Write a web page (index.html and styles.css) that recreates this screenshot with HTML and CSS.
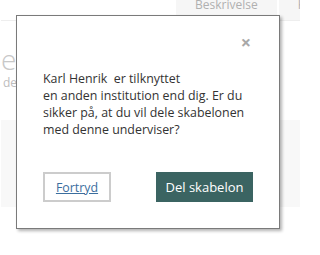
FILE: index.html
```html
<!DOCTYPE html>
<html lang="da">
<head>
<meta charset="utf-8">
<link rel="stylesheet" href="styles.css">
</head>
<body>
<div class="page">
  <div class="tabs">
    <div class="tab">Beskrivelse</div>
    <div class="tab">Kommentarer</div>
  </div>
  <h1 class="title">el</h1>
  <p class="sub">de</p>
  <div class="panel"></div>
</div>

<div class="modal">
  <div class="modal-head"><span class="close">×</span></div>
  <p class="msg">Karl Henrik&nbsp; er tilknyttet<br>en anden institution end dig. Er du<br>sikker på, at du vil dele skabelonen<br>med denne underviser?</p>
  <div class="actions">
    <button class="btn-cancel"><span>Fortryd</span></button>
    <button class="btn-primary">Del skabelon</button>
  </div>
</div>
</body>
</html>
```

FILE: styles.css
```css
html, body {
  margin: 0;
  padding: 0;
  overflow: hidden;
}
body {
  width: 300px;
  height: 255px;
  position: relative;
  background: #fff;
  font-family: "Open Sans", "DejaVu Sans", sans-serif;
}
.page {
  width: 300px;
  overflow: hidden;
  padding-left: 1px;
  box-sizing: border-box;
}
.tabs {
  display: flex;
  gap: 2px;
  margin-top: -11px;
  padding-left: 175px;
  height: 31px;
  border-bottom: 1px solid #eeeeee;
  white-space: nowrap;
}
.tab {
  flex: none;
  background: #f6f6f6;
  color: #b0b0b0;
  font-size: 12px;
  line-height: 31px;
  padding: 0 19px;
}
.title {
  margin: 23px 0 0;
  font-size: 28px;
  line-height: 31px;
  font-weight: 300;
  color: #c8c8c8;
}
.sub {
  margin: 0;
  font-size: 12px;
  line-height: 16px;
  color: #bdbdbd;
  padding-left: 2px;
}
.panel {
  margin-top: 29px;
  height: 87px;
  background: #f8f8f8;
}
.modal {
  position: absolute;
  left: 16px;
  top: 15px;
  width: 264px;
  height: 214px;
  box-sizing: border-box;
  border: 1px solid #7a7a7a;
  background: #fff;
  box-shadow: 2px 2px 3px rgba(0, 0, 0, 0.3);
  padding: 0 26px;
  display: flex;
  flex-direction: column;
}
.modal-head {
  display: flex;
  justify-content: flex-end;
  height: 54px;
  padding-top: 16px;
  box-sizing: border-box;
}
.close {
  color: #a8a8a8;
  font-size: 18px;
  font-weight: 700;
  line-height: 20px;
  margin-right: 2px;
}
.msg {
  margin: 0;
  font-size: 12.4px;
  line-height: 17px;
  color: #333;
  white-space: nowrap;
}
.actions {
  display: flex;
  justify-content: space-between;
  margin-top: 34px;
}
.btn-cancel {
  width: 68px;
  height: 30px;
  background: #fff;
  border: 2px solid #cccccc;
  padding: 0;
  font-family: inherit;
  font-size: 12.4px;
  color: #3b6e9e;
}
.btn-cancel span {
  text-decoration: underline;
}
.btn-primary {
  width: 97px;
  height: 30px;
  background: #3b6462;
  color: #fff;
  border: 0;
  padding: 0;
  font-family: inherit;
  font-size: 13px;
}
```
